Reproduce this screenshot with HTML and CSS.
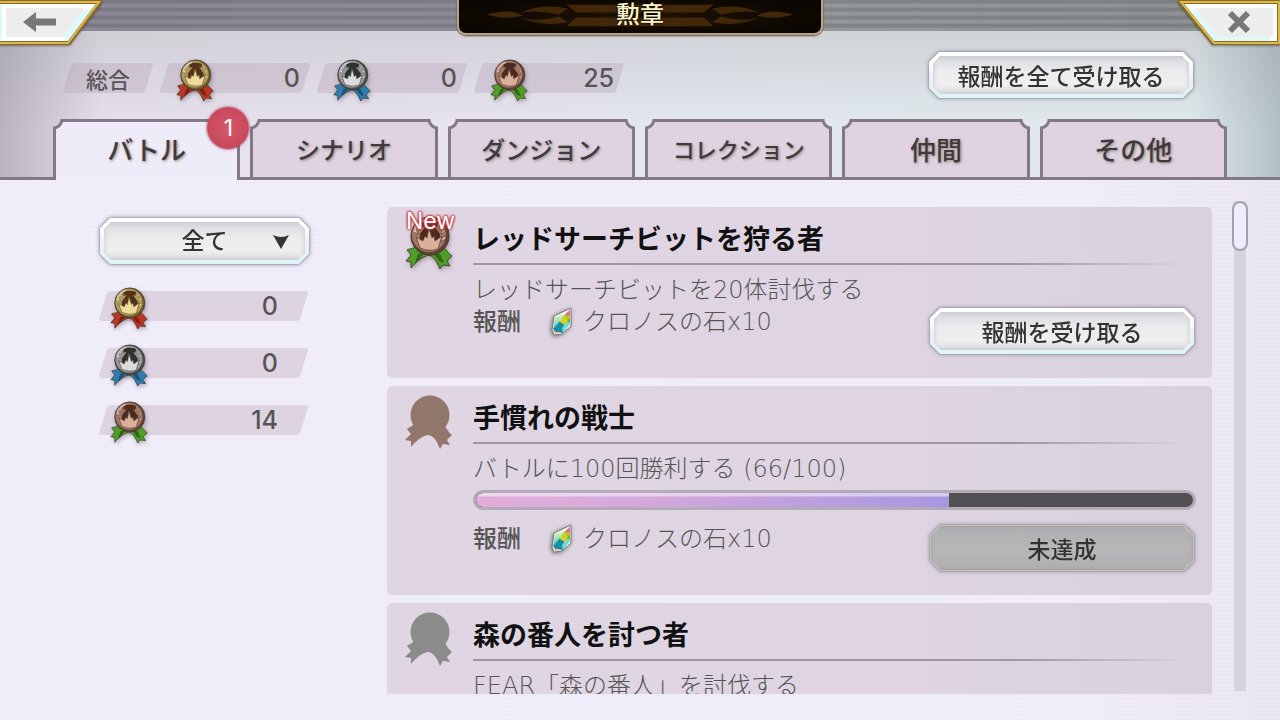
FILE: index.html
```html
<!DOCTYPE html>
<html lang="ja">
<head>
  <meta charset="UTF-8">
  <title>勲章</title>
  <meta name="viewport" content="width=device-width, initial-scale=1.0">
  <link rel="stylesheet" href="styles.css">
</head>
<body>

  <!-- Shared icons -->
  <svg class="sprite" aria-hidden="true">
    <defs>
      <linearGradient id="gem-left" x1="0" y1="0" x2="0" y2="1">
        <stop offset="0" stop-color="#ffffff"/>
        <stop offset="0.45" stop-color="#b8ecb0"/>
        <stop offset="1" stop-color="#4cc8d8"/>
      </linearGradient>
      <linearGradient id="gem-right" x1="0" y1="0" x2="0" y2="1">
        <stop offset="0" stop-color="#f2a0ee"/>
        <stop offset="0.3" stop-color="#e0607c"/>
        <stop offset="0.5" stop-color="#c8d020"/>
        <stop offset="0.75" stop-color="#38b868"/>
        <stop offset="1" stop-color="#c8f4f4"/>
      </linearGradient>
    </defs>
    <symbol id="ribbon" viewBox="0 0 48 54">
      <circle cx="25" cy="20" r="19.5"/>
      <path d="M8 30 C5 33 3 32 2 34 L6 39 L0 45 L6 46 L6 52 C12 45 17 41 23 40 C29 41 32 46 35 54 L38 49 L45 50 L42 45 L47 40 C43 37 42 34 40 31 Z"/>
    </symbol>
    <symbol id="medal" viewBox="0 0 48 54">
      <path class="bow" d="M10 31 C6 34 4 32 2 34 L6 39 L1 45 L6 46 L6 52 C12 45 17 41 24 39 C29 41 32 46 35 53 L38 49 L45 50 L42 45 L47 40 C43 37 42 34 38 31 Z"/>
      <path class="fold" d="M13 38 L20 36 L14 44 L10 47 Z M35 38 L28 37 L34 45 L39 47 Z"/>
      <circle class="rim" cx="25" cy="20" r="19"/>
      <circle class="coin" cx="24" cy="19" r="17"/>
      <path class="leaf" d="M12 8 q4 1 3 5 q-4 -1 -3 -5 M9 13 q4 1 4 5 q-5 -1 -4 -5 M37 8 q-4 1 -3 5 q4 -1 3 -5 M40 13 q-4 1 -4 5 q5 -1 4 -5 M41 20 q-5 1 -5 5 q5 0 5 -5"/>
      <path class="mark" d="M17 6 Q25 3 33 6 L32 11 L29 10 L35 18 L35 24 L15 24 L15 18 L21 10 L17 11 Z"/>
      <path class="crown" d="M11 21 L18 25 L20 20 L22 22 L24 12 L27 22 L29 20 L30 25 L37 20 L33 33 Q24 36 15 32 Z"/>
      <path class="shine" d="M9 16 Q11 7 20 4"/>
    </symbol>
    <symbol id="gem" viewBox="0 0 22 30">
      <path d="M20 1 L20 19 L11 27 L3 28 L1 23 L3 9 Z" fill="#ffffff" stroke="#777777" stroke-width="1"/>
      <path d="M18 3 L11 13 L2 22 L4 10 Z" fill="url(#gem-left)"/>
      <path d="M19 2 L19 18 L10 17 L11 11 Z" fill="url(#gem-right)"/>
      <path d="M2 22 L9 14 L14 18 L12 26 L4 25 Z" fill="#188ea0"/>
      <path d="M14 17 L19 17 L12 26 L11 21 Z" fill="#6fd9d8"/>
      <path d="M9 15 L13 9 L17 13 L14 18 Z" fill="#d8cf20"/>
      <path d="M2 23 L5 25 L10 26 L4 27 Z" fill="#f6b394"/>
    </symbol>
  </svg>

  <header class="topbar">
    <button class="corner" type="button" aria-label="戻る">
      <svg viewBox="0 0 102 46">
        <path d="M-3 2 H100 L69 43 H-3 Z" fill="#dff8fa" stroke="#8a6a22" stroke-width="4"/>
        <path d="M-3 2 H99 L68 43 H-3 Z" fill="none" stroke="#dcb851" stroke-width="2"/>
        <path d="M2 4 H95 L90 10 H8 V37 H65 L65 41 H2 Z" fill="#ffffff"/>
        <path d="M6 8 H85 L63 37 H6 Z" fill="#ededee"/>
        <path d="M23 22 L36 12 V18.500 H56 V25.500 H36 V32 Z" fill="#777777"/>
      </svg>
    </button>
    <div class="banner">
      <svg class="ornament" viewBox="0 0 364 34" preserveAspectRatio="none" aria-hidden="true">
        <g fill="#432709">
          <path d="M108 5 H256 L246 13 H118 Z"/>
          <path d="M118 18 H246 L256 27 H108 Z"/>
          <path d="M28 15 Q52 8 64 16 Q48 21 28 15"/>
          <path d="M62 13 Q84 3 110 9 L100 15 Q78 10 62 13"/>
          <path d="M62 18 Q84 28 110 23 L100 17 Q78 23 62 18"/>
          <path d="M336 15 Q312 8 300 16 Q316 21 336 15"/>
          <path d="M302 13 Q280 3 254 9 L264 15 Q286 10 302 13"/>
          <path d="M302 18 Q280 28 254 23 L264 17 Q286 23 302 18"/>
        </g>
      </svg>
      <h1>勲章</h1>
    </div>
    <button class="corner corner-right" type="button" aria-label="閉じる">
      <svg viewBox="0 0 102 46">
        <path d="M2 2 H101 V43 H35 Z" fill="#dff8fa" stroke="#8a6a22" stroke-width="4"/>
        <path d="M3 2 H101 V43 H36 Z" fill="none" stroke="#dcb851" stroke-width="2"/>
        <path d="M8 4 H99 V41 H92 V10 H14 Z" fill="#ffffff"/>
        <path d="M17 8 H95 V37 H40 Z" fill="#ededee"/>
        <path d="M52 13 L70 31 M70 13 L52 31" fill="none" stroke="#777777" stroke-width="6"/>
      </svg>
    </button>
  </header>

  <section class="summary">
    <div class="totals">
      <div class="pill pill-label">総合</div>
      <div class="pill gold"><svg class="medal"><use href="#medal"/></svg><span>0</span></div>
      <div class="pill silver"><svg class="medal"><use href="#medal"/></svg><span>0</span></div>
      <div class="pill bronze"><svg class="medal"><use href="#medal"/></svg><span>25</span></div>
    </div>
    <button class="bevel" type="button">報酬を全て受け取る</button>
  </section>

  <nav class="tabs">
    <button class="tab active" type="button">バトル<span class="badge">1</span></button>
    <button class="tab" type="button">シナリオ</button>
    <button class="tab" type="button">ダンジョン</button>
    <button class="tab long" type="button">コレクション</button>
    <button class="tab short" type="button">仲間</button>
    <button class="tab short" type="button">その他</button>
  </nav>

  <main class="panel">
    <aside class="sidebar">
      <div class="bevel filter">
        <select aria-label="絞り込み">
          <option>全て</option>
        </select>
        <svg class="arrow" viewBox="0 0 16 14" aria-hidden="true"><path d="M0 0 Q8 4 16 0 L8 14 Z" fill="#333333"/></svg>
      </div>
      <div class="pill gold"><svg class="medal"><use href="#medal"/></svg><span>0</span></div>
      <div class="pill silver"><svg class="medal"><use href="#medal"/></svg><span>0</span></div>
      <div class="pill bronze"><svg class="medal"><use href="#medal"/></svg><span>14</span></div>
    </aside>

    <div class="list">
      <article class="card">
        <div class="card-icon bronze">
          <svg class="medal"><use href="#medal"/></svg>
          <span class="new">New</span>
        </div>
        <div class="card-body">
          <h2>レッドサーチビットを狩る者</h2>
          <p>レッドサーチビットを20体討伐する</p>
          <div class="card-foot">
            <b>報酬</b>
            <svg class="gem"><use href="#gem"/></svg>
            <span>クロノスの石x10</span>
            <button class="bevel" type="button">報酬を受け取る</button>
          </div>
        </div>
      </article>

      <article class="card">
        <div class="card-icon brown">
          <svg class="medal"><use href="#ribbon"/></svg>
        </div>
        <div class="card-body">
          <h2>手慣れの戦士</h2>
          <p>バトルに100回勝利する (66/100)</p>
          <div class="progress" role="progressbar" aria-label="進行度" aria-valuenow="66" aria-valuemin="0" aria-valuemax="100">
            <div class="progress-fill" style="width: 66%"></div>
          </div>
          <div class="card-foot">
            <b>報酬</b>
            <svg class="gem"><use href="#gem"/></svg>
            <span>クロノスの石x10</span>
            <button class="bevel" type="button" disabled>未達成</button>
          </div>
        </div>
      </article>

      <article class="card">
        <div class="card-icon grey">
          <svg class="medal"><use href="#ribbon"/></svg>
        </div>
        <div class="card-body">
          <h2>森の番人を討つ者</h2>
          <p>FEAR「森の番人」を討伐する</p>
        </div>
      </article>
    </div>

    <div class="scrollbar"><div class="thumb"></div></div>
  </main>

</body>
</html>
```

FILE: styles.css
```css
* {
  box-sizing: border-box;
}

body {
  --line: #83788a;
  margin: 0;
  height: 100vh;
  display: flex;
  flex-direction: column;
  overflow: hidden;
  font-family: Inter, "Noto Sans CJK JP", sans-serif;
  color: #555;
  background:
    linear-gradient(to right, rgba(120, 115, 125, 0.4), transparent 8%, transparent 93%, rgba(110, 130, 138, 0.4)),
    linear-gradient(rgba(190, 190, 195, 0.5) 30px, transparent 130px),
    linear-gradient(to right, #e5dfe9, #e8e4f0 35%, #e2e9ee 60%, #dfe9ec);
}

button, select {
  font: inherit;
  border: 0;
  background: none;
  padding: 0;
  cursor: pointer;
}

h1, h2, p {
  margin: 0;
}

.sprite {
  position: absolute;
  width: 0;
  height: 0;
}

/* Top bar */
.topbar {
  display: grid;
  grid-template-columns: 1fr auto 1fr;
  align-items: start;
  height: 31px;
  background:
    repeating-linear-gradient(rgba(0, 0, 0, 0.12) 0, rgba(0, 0, 0, 0.12) 3px, transparent 4px, transparent 7px, rgba(0, 0, 0, 0.12) 8px),
    linear-gradient(to right, #8b8795, #8e8d98 40%, #939799 65%, #8c9092);
}

.corner {
  width: 102px;
  height: 46px;
}

.corner svg {
  display: block;
  width: 102px;
  height: 46px;
  filter: drop-shadow(0 1px 1px rgba(0, 0, 0, 0.4));
}

.corner-right {
  justify-self: end;
}

.banner {
  display: grid;
  width: 366px;
  height: 35px;
  overflow: hidden;
  background: radial-gradient(ellipse, #1e1204, #0c0702 75%);
  border: 2px solid #b9a27f;
  border-top: 0;
  border-radius: 0 0 9px 9px;
  box-shadow: 0 1px 2px #5a4630;
}

.banner h1, .ornament {
  grid-area: 1 / 1;
}

.ornament {
  width: 100%;
  height: 33px;
}

.banner h1 {
  font-size: 24px;
  line-height: 29px;
  font-weight: 500;
  text-align: center;
  color: #fbf3cb;
  text-shadow: 0 0 3px #000;
}

/* Medals */
.medal {
  display: block;
  flex: none;
  width: 38px;
  height: 43px;
  filter: drop-shadow(1px 2px 2px rgba(60, 40, 60, 0.35));
}

.bow { fill: var(--bow); stroke: #3a3326; stroke-width: 0.8; }
.fold { fill: #000; opacity: 0.35; }
.rim { fill: var(--dark); stroke: #40382c; }
.coin { fill: var(--coin); }
.leaf { fill: var(--light); stroke: var(--dark); stroke-width: 0.7; }
.mark { fill: var(--mark); }
.crown { fill: var(--light); stroke: var(--dark); stroke-width: 0.8; }
.shine { fill: none; stroke: #fff; stroke-width: 2; opacity: 0.5; }

.gold { --coin: #b09a5c; --dark: #6b5a2b; --light: #efdc9c; --mark: #55331a; --bow: #b93524; }
.silver { --coin: #989898; --dark: #4c4c4c; --light: #dcdcdc; --mark: #303030; --bow: #2f7db0; }
.bronze { --coin: #a37763; --dark: #624236; --light: #dab09a; --mark: #492b21; --bow: #4f9e26; }

/* Counters */
.pill {
  position: relative;
  z-index: 0;
  display: flex;
  align-items: center;
  justify-content: space-between;
  width: 152px;
  height: 30px;
  padding: 0 11px 0 17px;
  font-size: 25px;
  font-weight: 500;
}

.pill::before {
  content: "";
  position: absolute;
  z-index: -1;
  inset: 0 5px;
  border-radius: 3px;
  background: rgba(187, 167, 187, 0.4);
  transform: skewX(-17deg);
}

.pill .medal {
  margin-top: 5px;
}

.pill-label {
  width: 92px;
  padding: 0;
  justify-content: center;
  font-size: 22px;
}

.summary {
  display: flex;
  align-items: center;
  justify-content: space-between;
  height: 88px;
  padding: 0 85px 0 62px;
}

.totals {
  display: flex;
  gap: 5px;
  padding-top: 5px;
}

/* Bevelled buttons */
.bevel {
  position: relative;
  z-index: 0;
  width: 268px;
  height: 50px;
  font-size: 23px;
  font-weight: 500;
  color: #333;
  filter: drop-shadow(0 0 1px #8b8790) drop-shadow(0 0 2px #9b97a0);
}

.bevel::before, .bevel::after {
  content: "";
  position: absolute;
  z-index: -1;
  inset: 2px;
  background: linear-gradient(#fff 20%, #eef0f5 55%, #dbf5f8);
  clip-path: polygon(10px 0, calc(100% - 10px) 0, 100% 10px, 100% calc(100% - 10px), calc(100% - 10px) 100%, 10px 100%, 0 calc(100% - 10px), 0 10px);
}

.bevel::after {
  inset: 6px;
  background: linear-gradient(#d4d7da, #ececed 40%, #efeff0 75%, #dcdbdf);
  box-shadow: inset 0 0 5px #c2c3c8;
  clip-path: polygon(7px 0, calc(100% - 7px) 0, 100% 7px, 100% calc(100% - 7px), calc(100% - 7px) 100%, 7px 100%, 0 calc(100% - 7px), 0 7px);
}

.bevel:disabled::before {
  background: #c3c2b5;
}

.bevel:disabled::after {
  inset: 3px;
  background: linear-gradient(#adafb2, #b7b7b8 50%, #b0aeb1);
  box-shadow: inset 0 0 5px #a0a0a4;
  clip-path: polygon(10px 0, calc(100% - 10px) 0, 100% 10px, 100% calc(100% - 10px), calc(100% - 10px) 100%, 10px 100%, 0 calc(100% - 10px), 0 10px);
}

/* Tabs */
.tabs {
  display: grid;
  grid-template-columns: repeat(6, 1fr);
  gap: 10px;
  height: 58px;
  padding: 0 53px;
}

/* the corner gradients cut the concave notches */
.tab {
  --fill: #dfd3e2;
  position: relative;
  min-width: 0;
  font-size: 24px;
  font-weight: 500;
  color: #3f3a3f;
  text-shadow: 1px 1px 3px #8d8477;
  background:
    radial-gradient(circle at 0 0, transparent 7px, var(--line) 8px, var(--line) 10px, var(--fill) 11px) left top / 10px 10px no-repeat,
    radial-gradient(circle at 100% 0, transparent 7px, var(--line) 8px, var(--line) 10px, var(--fill) 11px) right top / 10px 10px no-repeat,
    linear-gradient(var(--line) 3px, var(--fill) 3px) center top / calc(100% - 20px) 10px no-repeat,
    linear-gradient(to right, var(--line) 3px, var(--fill) 3px, var(--fill) calc(100% - 3px), var(--line) calc(100% - 3px)) 0 10px / 100% calc(100% - 10px) no-repeat;
}

.tab.active {
  --fill: #efecf9;
  z-index: 1;
  margin-bottom: -3px;
  padding-bottom: 3px;
  font-size: 26px;
}

.tab.long {
  font-size: 22px;
}

.tab.short {
  font-size: 26px;
}

.badge {
  position: absolute;
  top: -12px;
  right: -9px;
  width: 42px;
  height: 42px;
  border-radius: 50%;
  font-size: 23px;
  font-weight: 400;
  line-height: 42px;
  color: #fff;
  text-shadow: none;
  background: radial-gradient(#d4596a, #c44054);
  box-shadow: 0 0 3px #7b3a4c;
}

/* Panel */
.panel {
  flex: 1;
  display: flex;
  min-height: 0;
  padding: 0 32px 26px 98px;
  border-top: 3px solid var(--line);
  background:
    repeating-linear-gradient(rgba(255, 255, 255, 0.2) 0, transparent 2px, transparent 4px),
    linear-gradient(to right, #efecf9 85%, #e8e5ef);
}

.sidebar {
  flex: none;
  display: flex;
  flex-direction: column;
  gap: 27px;
  width: 213px;
  padding-top: 36px;
}

.sidebar .pill {
  width: 211px;
  padding: 0 31px 0 12px;
}

.sidebar .pill::before {
  background: #ddd3e1;
}

.filter {
  width: 100%;
  margin-bottom: -2px;
}

.filter select {
  width: 100%;
  height: 100%;
  appearance: none;
  color: inherit;
  text-align-last: center;
}

.arrow {
  position: absolute;
  top: 19px;
  right: 22px;
  width: 16px;
  height: 14px;
  pointer-events: none;
}

.list {
  flex: 1;
  min-width: 0;
  margin: 27px 20px 0 76px;
  overflow: auto;
  scrollbar-width: none;
}

.card {
  display: flex;
  gap: 18px;
  margin-bottom: 8px;
  padding: 0 16px 22px 18px;
  border-radius: 5px;
  background: linear-gradient(to right, #e0d6e3, #dfd5e2 60%, #d9d1de);
}

.card-icon {
  position: relative;
  flex: none;
  width: 50px;
  padding-top: 9px;
}

.card-icon .medal {
  width: 48px;
  height: 54px;
}

.brown { fill: #91776c; }
.grey { fill: #8b8b8b; }

.brown .medal, .grey .medal {
  filter: none;
}

.new {
  position: absolute;
  top: 0;
  left: 1px;
  font-size: 23px;
  line-height: 28px;
  font-weight: 400;
  color: #fff;
  text-shadow: 0 0 2px #c0303a, 0 0 2px #c0303a, 0 0 3px #c0303a, 0 0 3px #c0303a;
}

.card-body {
  flex: 1;
  min-width: 0;
}

.card h2 {
  height: 58px;
  padding-top: 13px;
  font-size: 27px;
  line-height: 40px;
  font-weight: 700;
  color: #111;
  background: linear-gradient(to right, #a0979a 75%, transparent 99%) left bottom / 100% 2px no-repeat;
}

.card p {
  margin-top: 9px;
}

.card p, .card-foot {
  font-family: "DejaVu Sans", "Noto Sans CJK JP", sans-serif;
  font-size: 24px;
  line-height: 32px;
  font-weight: 300;
  color: #555;
}

.card-foot {
  display: flex;
  align-items: flex-start;
}

.card-foot b {
  font-weight: 500;
}

.card-foot .bevel {
  margin-left: auto;
  font-family: "Noto Sans CJK JP", sans-serif;
}

.gem {
  width: 22px;
  height: 30px;
  margin: 1px 10px 0 30px;
  filter: drop-shadow(-1px 1px 2px rgba(40, 40, 40, 0.6));
}

.progress {
  height: 20px;
  margin: 5px 0 13px;
  overflow: hidden;
  border: 3px solid #b4abb8;
  border-radius: 10px;
  background: #515153;
}

.progress-fill {
  height: 100%;
  border-radius: 7px 0 0 7px;
  background:
    linear-gradient(rgba(255, 255, 255, 0.5) 3px, transparent 4px),
    linear-gradient(to right, #e2aed8, #d5a8dc 35%, #a797df);
}

.scrollbar {
  flex: none;
  width: 16px;
  margin: 21px 0 3px;
  background: linear-gradient(#d5d4dd, #d5d4dd) center / 12px 100% no-repeat;
}

.thumb {
  height: 50px;
  border: 2px solid #a3a1ad;
  border-radius: 8px;
  background: #efecfc;
}
```
